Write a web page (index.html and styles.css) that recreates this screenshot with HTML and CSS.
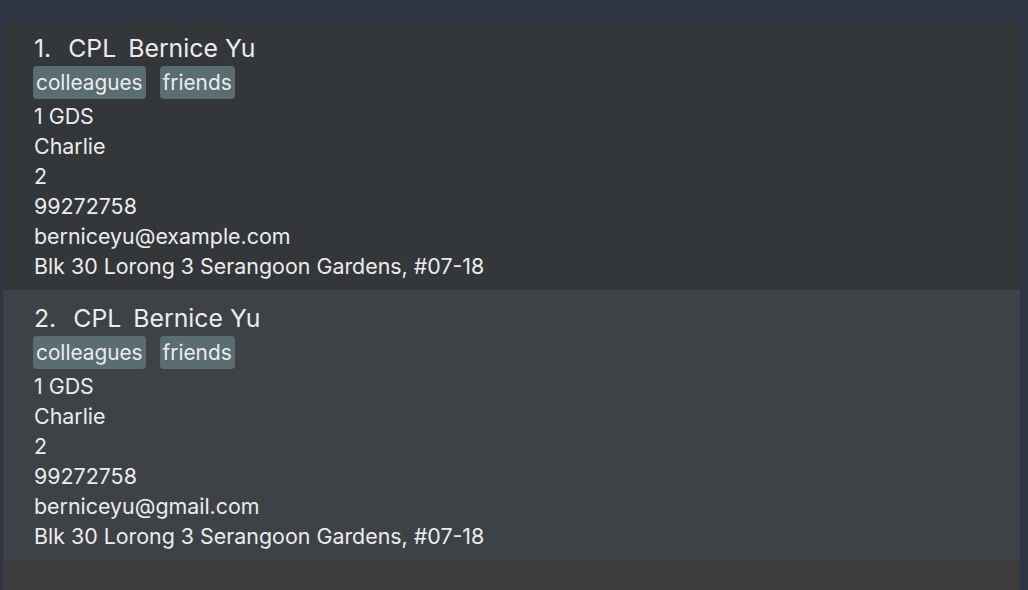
FILE: index.html
```html
<!DOCTYPE html>
<html>
<head>
<meta charset="utf-8">
<link rel="stylesheet" href="styles.css">
</head>
<body>
<div class="panel">
  <div class="list">
    <div class="card card-a">
      <div class="name"><span class="idx">1.</span><span class="rank">CPL</span><span>Bernice Yu</span></div>
      <div class="tags"><span class="tag">colleagues</span><span class="tag">friends</span></div>
      <div class="line">1 GDS</div>
      <div class="line">Charlie</div>
      <div class="line">2</div>
      <div class="line">99272758</div>
      <div class="line">berniceyu@example.com</div>
      <div class="line">Blk 30 Lorong 3 Serangoon Gardens, #07-18</div>
    </div>
    <div class="card card-b">
      <div class="name"><span class="idx">2.</span><span class="rank">CPL</span><span>Bernice Yu</span></div>
      <div class="tags"><span class="tag">colleagues</span><span class="tag">friends</span></div>
      <div class="line">1 GDS</div>
      <div class="line">Charlie</div>
      <div class="line">2</div>
      <div class="line">99272758</div>
      <div class="line">berniceyu@gmail.com</div>
      <div class="line">Blk 30 Lorong 3 Serangoon Gardens, #07-18</div>
    </div>
    <div class="filler"></div>
  </div>
</div>
</body>
</html>
```
FILE: styles.css
```css
html, body {
  margin: 0;
  height: 100%;
}
body {
  background: #2e3544;
  font-family: Inter, "Noto Sans", sans-serif;
  color: #ececec;
  overflow: hidden;
}
.panel {
  height: 100%;
  box-sizing: border-box;
  padding: 20px 8px 0 3px;
}
.list {
  height: 100%;
  display: flex;
  flex-direction: column;
  background: #3c3c3c;
}
.card {
  height: 270px;
  box-sizing: border-box;
  padding: 13px 0 0 31px;
}
.card-a { background: #333739; }
.card-b { background: #3c4245; }
.name {
  font-size: 24.8px;
  line-height: 30px;
  display: flex;
}
.idx { margin-right: 17px; }
.rank { margin-right: 12px; }
.tags {
  display: flex;
  gap: 14px;
  margin: 3px 0 2px -1px;
}
.tag {
  background: #5a6d72;
  border-radius: 4px;
  font-size: 20.8px;
  line-height: 33px;
  padding: 0 3px;
}
.line {
  font-size: 21.4px;
  line-height: 30px;
}
```
